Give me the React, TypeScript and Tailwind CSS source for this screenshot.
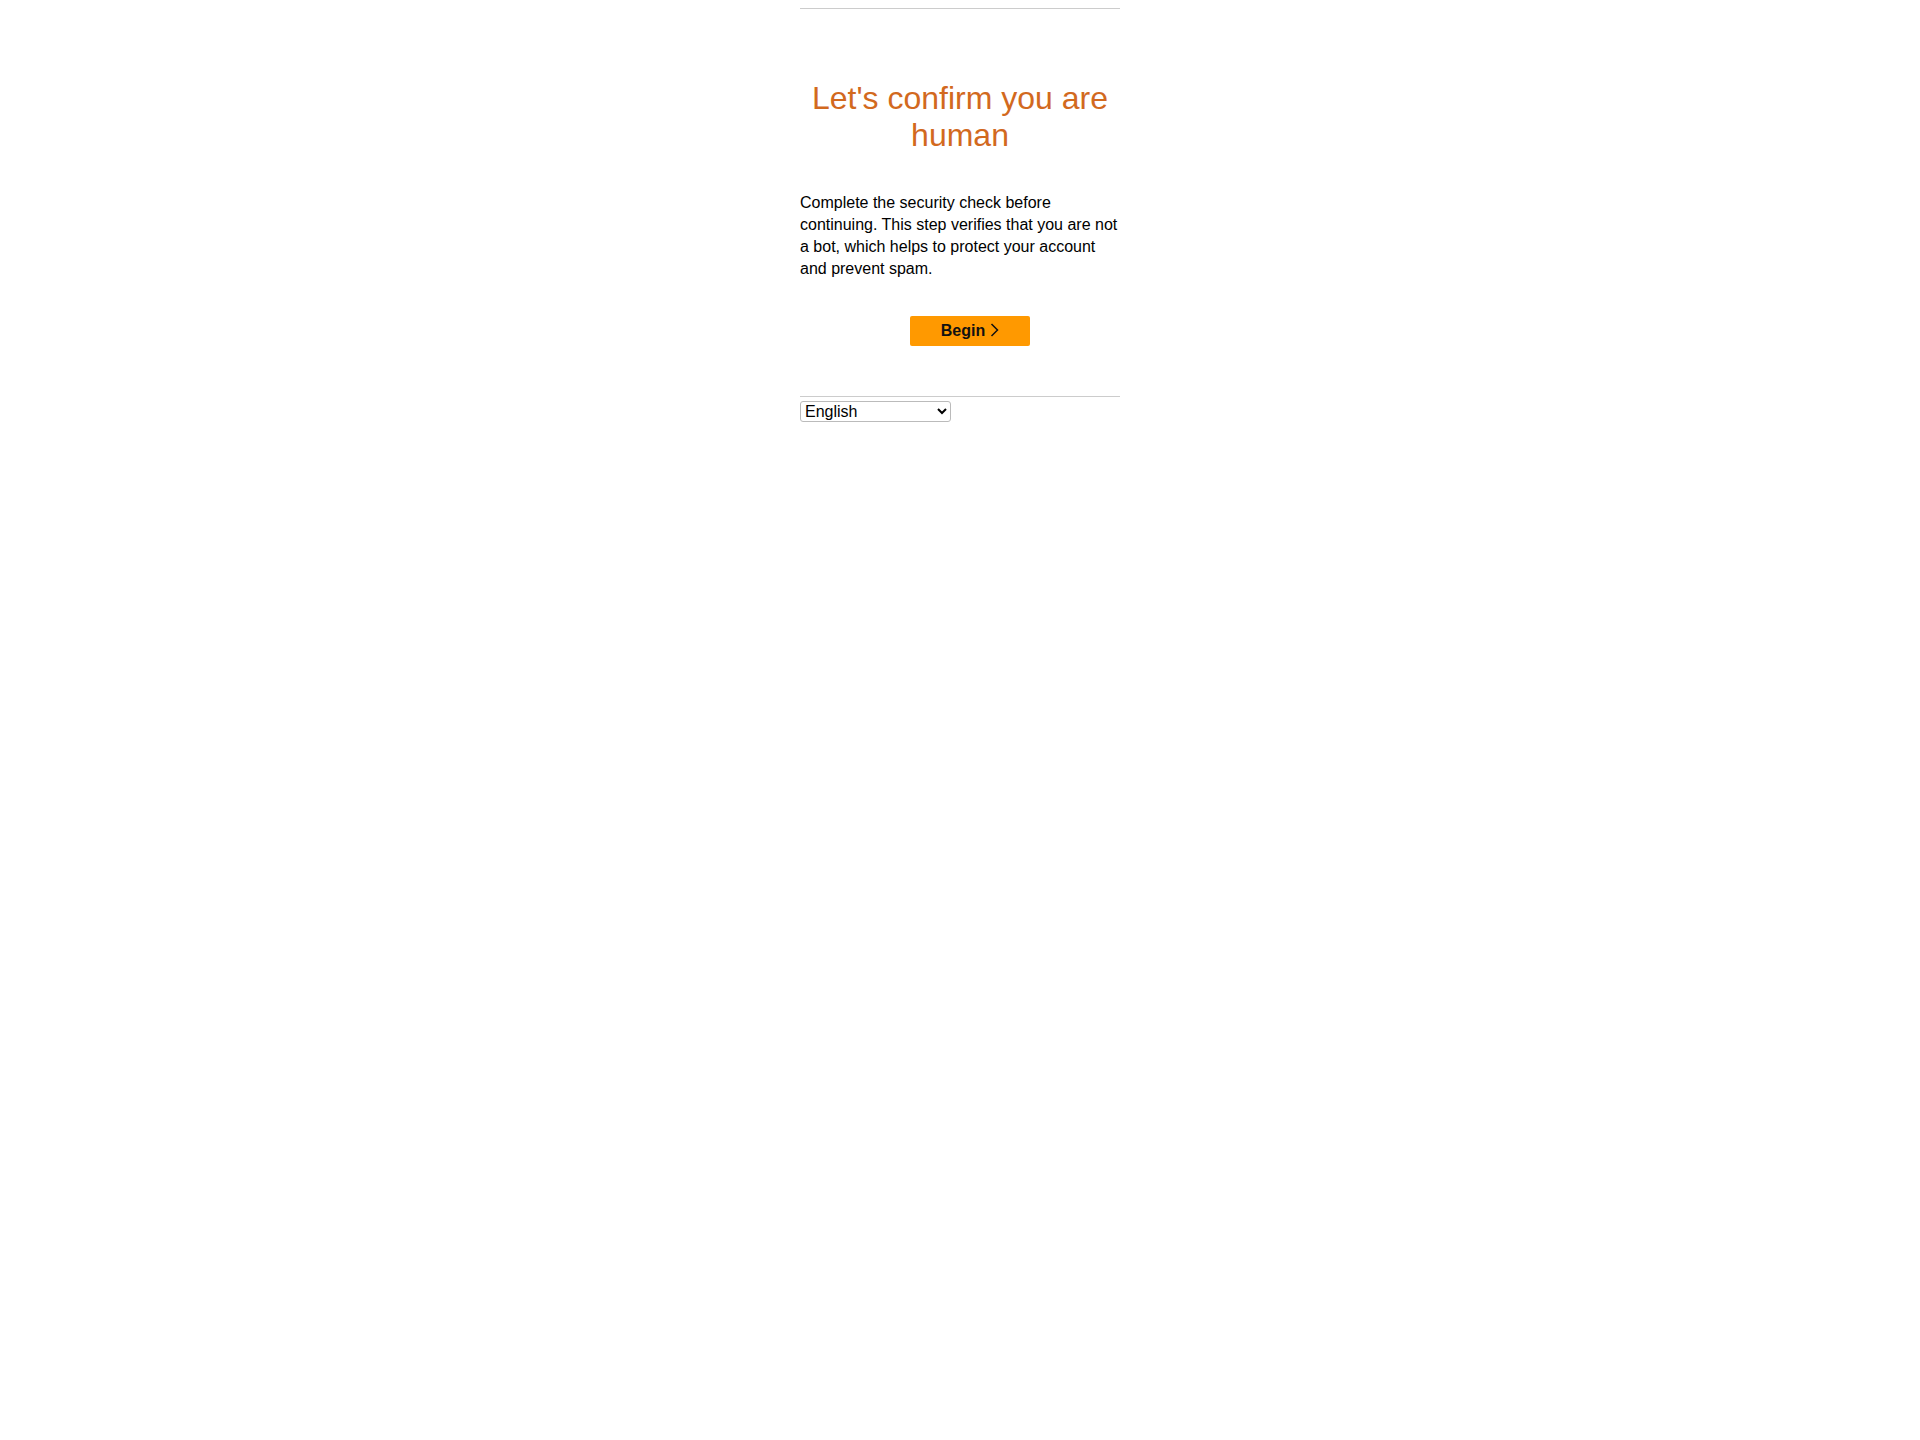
export default function App() {
  return (
    <div className="min-h-screen bg-white font-['Liberation_Sans',Arial,sans-serif] text-[#111]">
      <div className="mx-auto w-[320px] pt-2">
        {/* top rule */}
        <div className="border-t border-[#cccccc]" />

        <h1 className="mt-[71px] text-center text-[32px] leading-[37px] font-normal text-[#d2691e]">
          Let's confirm you are human
        </h1>

        <p className="mt-[38px] text-[16px] leading-[22px] text-black">
          Complete the security check before continuing. This step verifies that you are not a bot, which helps to protect your account and prevent spam.
        </p>

        <div className="mt-[36px] flex justify-center pl-5">
          <button className="flex h-[30px] w-[120px] items-center justify-center gap-[5px] rounded-[2px] bg-[#ff9900] text-[16px] font-bold text-[#111]">
            Begin
            <svg width="9" height="16" viewBox="0 0 9 16" fill="none" className="-mt-[2px]">
              <path d="M1.5 2 L7.5 8 L1.5 14" stroke="#111" strokeWidth="1.5" />
            </svg>
          </button>
        </div>

        {/* bottom rule */}
        <div className="mt-[50px] border-t border-[#cccccc]" />

        <div className="mt-[3px]">
          <select
            defaultValue="en"
            className="h-[21px] w-[151px] rounded-[3px] border border-[#bbbbbb] bg-white pl-0 text-[16px] leading-[18px] text-black"
          >
            <option value="en">English</option>
          </select>
        </div>
      </div>
    </div>
  );
}
